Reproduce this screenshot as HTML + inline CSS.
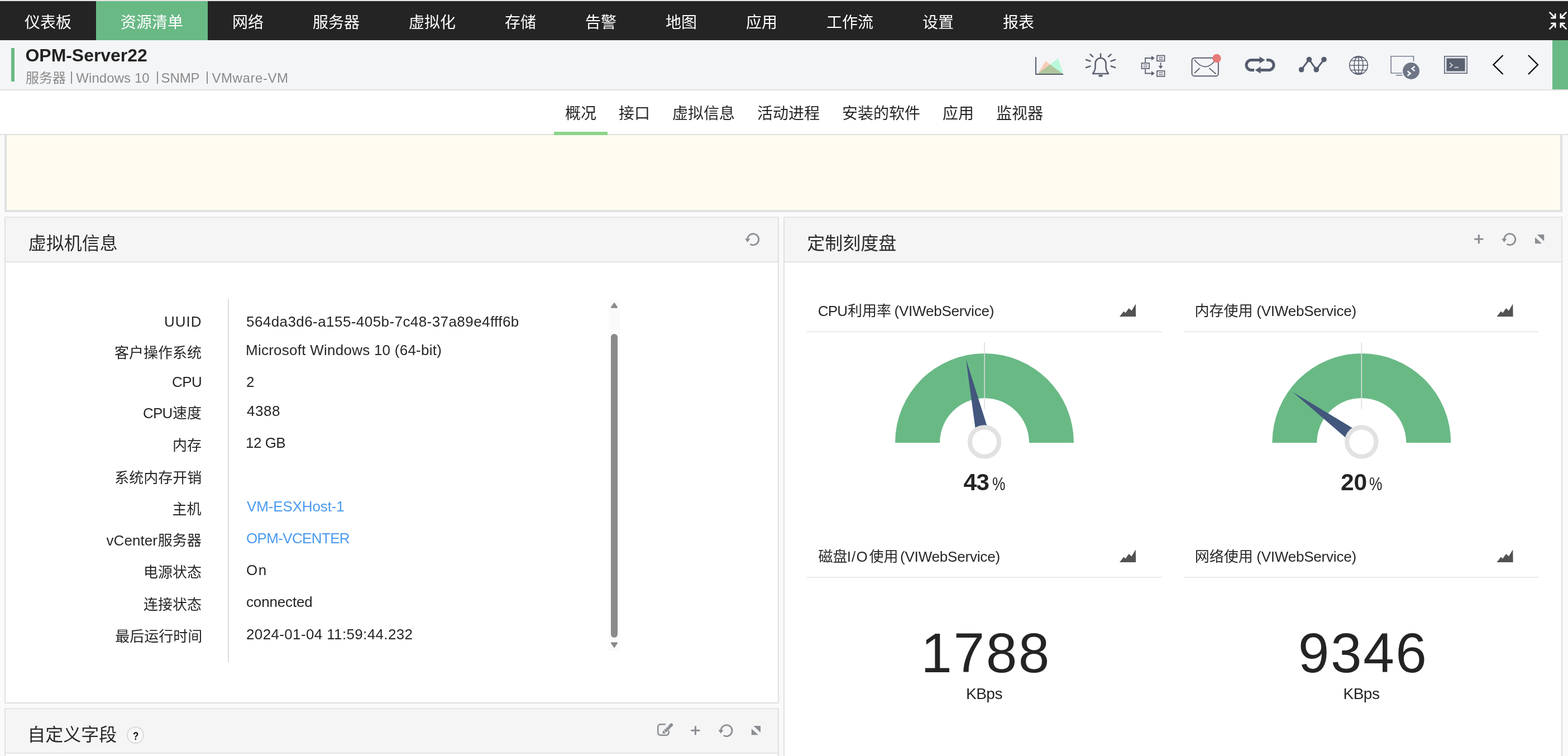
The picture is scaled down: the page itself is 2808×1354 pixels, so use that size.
<!DOCTYPE html>
<html lang="zh-CN"><head><meta charset="utf-8"><title>OPM-Server22</title>
<style>
html,body{margin:0;padding:0;}
body{width:2808px;height:1354px;overflow:hidden;background:#fafafa;font-family:'Liberation Sans','Noto Sans CJK SC',sans-serif;position:relative;}
#root{position:absolute;left:0;top:0;width:2808px;height:1354px;overflow:hidden;will-change:transform;}
#root>div,#root>span,#root>svg{position:absolute;}
#root>span{white-space:pre;display:block;}
</style></head>
<body><div id="root">
<div style="left:0px;top:0px;width:2808px;height:2px;background:#e7e7e5;"></div>
<div style="left:0px;top:2px;width:2808px;height:70px;background:#242424;"></div>
<div style="left:172px;top:2px;width:200px;height:70px;background:#69b985;"></div>
<span style="left:44.00px;top:26.54px;font-size:28px;line-height:28px;color:#fff;">仪表板</span>
<span style="left:216.00px;top:26.54px;font-size:28px;line-height:28px;color:#fff;">资源清单</span>
<span style="left:416.00px;top:26.54px;font-size:28px;line-height:28px;color:#fff;">网络</span>
<span style="left:560.00px;top:26.54px;font-size:28px;line-height:28px;color:#fff;">服务器</span>
<span style="left:732.00px;top:26.54px;font-size:28px;line-height:28px;color:#fff;">虚拟化</span>
<span style="left:904.00px;top:26.54px;font-size:28px;line-height:28px;color:#fff;">存储</span>
<span style="left:1048.00px;top:26.54px;font-size:28px;line-height:28px;color:#fff;">告警</span>
<span style="left:1192.00px;top:26.54px;font-size:28px;line-height:28px;color:#fff;">地图</span>
<span style="left:1336.00px;top:26.54px;font-size:28px;line-height:28px;color:#fff;">应用</span>
<span style="left:1480.00px;top:26.54px;font-size:28px;line-height:28px;color:#fff;">工作流</span>
<span style="left:1652.00px;top:26.54px;font-size:28px;line-height:28px;color:#fff;">设置</span>
<span style="left:1796.00px;top:26.54px;font-size:28px;line-height:28px;color:#fff;">报表</span>
<div style="left:0px;top:72px;width:2808px;height:88px;background:#f4f5f7;"></div>
<div style="left:0px;top:160px;width:2808px;height:2px;background:#e1e1e1;"></div>
<div style="left:20px;top:86px;width:6px;height:60px;background:#69b985;"></div>
<div style="left:2780px;top:72px;width:28px;height:88px;background:#69b985;"></div>
<span style="left:45.50px;top:82.91px;font-size:32px;line-height:32px;color:#222;font-weight:bold;letter-spacing:-0.05px;">OPM-Server22</span>
<span style="left:46.00px;top:127.68px;font-size:24px;line-height:24px;color:#8a8a8a;">服务器</span>
<span style="left:136.25px;top:127.68px;font-size:24px;line-height:24px;color:#8a8a8a;letter-spacing:0.08px;">Windows 10</span>
<span style="left:288.50px;top:127.68px;font-size:24px;line-height:24px;color:#8a8a8a;letter-spacing:-0.08px;">SNMP</span>
<span style="left:379.50px;top:127.68px;font-size:24px;line-height:24px;color:#8a8a8a;letter-spacing:0.56px;">VMware-VM</span>
<div style="left:126.5px;top:128px;width:2px;height:22px;background:#8f8f8f;"></div>
<div style="left:280.5px;top:128px;width:2px;height:22px;background:#8f8f8f;"></div>
<div style="left:370px;top:128px;width:2px;height:22px;background:#8f8f8f;"></div>
<div style="left:0px;top:162px;width:2808px;height:78px;background:#fff;"></div>
<div style="left:0px;top:240px;width:2808px;height:2px;background:#dfdfdf;"></div>
<div style="left:992px;top:236px;width:96px;height:6px;background:#8cd489;"></div>
<span style="left:1012.00px;top:190.02px;font-size:28px;line-height:28px;color:#262626;">概况</span>
<span style="left:1108.00px;top:190.02px;font-size:28px;line-height:28px;color:#262626;">接口</span>
<span style="left:1204.00px;top:190.02px;font-size:28px;line-height:28px;color:#262626;">虚拟信息</span>
<span style="left:1356.00px;top:190.02px;font-size:28px;line-height:28px;color:#262626;">活动进程</span>
<span style="left:1508.00px;top:190.02px;font-size:28px;line-height:28px;color:#262626;">安装的软件</span>
<span style="left:1688.00px;top:190.02px;font-size:28px;line-height:28px;color:#262626;">应用</span>
<span style="left:1784.00px;top:190.02px;font-size:28px;line-height:28px;color:#262626;">监视器</span>
<div style="left:8px;top:242px;width:2790px;height:138px;background:#e1e1e1;"></div>
<div style="left:12px;top:242px;width:2782px;height:134px;background:#fefcf0;"></div>
<div style="left:8px;top:388px;width:1387px;height:872px;background:#e0e0e0;"></div>
<div style="left:8px;top:388px;width:1387px;height:2px;background:#e6e6e6;"></div>
<div style="left:10px;top:390px;width:1383px;height:78px;background:#f5f5f5;"></div>
<div style="left:10px;top:468px;width:1383px;height:2px;background:#e3e3e3;"></div>
<div style="left:10px;top:470px;width:1383px;height:788px;background:#fff;"></div>
<div style="left:8px;top:1268px;width:1387px;height:200px;background:#e0e0e0;"></div>
<div style="left:8px;top:1268px;width:1387px;height:2px;background:#e6e6e6;"></div>
<div style="left:10px;top:1270px;width:1383px;height:78px;background:#f5f5f5;"></div>
<div style="left:10px;top:1348px;width:1383px;height:2px;background:#e3e3e3;"></div>
<div style="left:10px;top:1350px;width:1383px;height:116px;background:#fff;"></div>
<div style="left:1403px;top:388px;width:1395px;height:1100px;background:#e0e0e0;"></div>
<div style="left:1403px;top:388px;width:1395px;height:2px;background:#e6e6e6;"></div>
<div style="left:1405px;top:390px;width:1391px;height:78px;background:#f5f5f5;"></div>
<div style="left:1405px;top:468px;width:1391px;height:2px;background:#e3e3e3;"></div>
<div style="left:1405px;top:470px;width:1391px;height:1016px;background:#fff;"></div>
<span style="left:50.66px;top:419.88px;font-size:32px;line-height:32px;color:#2a2a2a;">虚拟机信息</span>
<span style="left:1445.35px;top:419.88px;font-size:32px;line-height:32px;color:#2a2a2a;">定制刻度盘</span>
<span style="left:49.18px;top:1299.92px;font-size:32px;line-height:32px;color:#2a2a2a;">自定义字段</span>
<div style="left:226.5px;top:1301.25px;width:27px;height:27px;background:#f8f8f8;border:2px solid #dbdbdb;border-radius:50%;"></div>
<span style="left:237.60px;top:1307.10px;font-size:21px;line-height:21px;color:#111;font-weight:bold;transform:scaleX(0.8);transform-origin:0 0;">?</span>
<div style="left:408px;top:536px;width:2px;height:650px;background:#dcdcdc;"></div>
<div style="left:1090px;top:536px;width:20px;height:630px;background:#fafafa;"></div>
<div style="left:1094px;top:598px;width:12px;height:544px;background:#8a8a8a;border-radius:6px;"></div>
<span style="left:294.00px;top:562.99px;font-size:26px;line-height:26px;color:#262626;letter-spacing:1.0px;">UUID</span>
<span style="left:205.09px;top:619.16px;font-size:26px;line-height:26px;color:#262626;">客户操作系统</span>
<span style="left:308.00px;top:670.99px;font-size:26px;line-height:26px;color:#262626;letter-spacing:-0.5px;">CPU</span>
<span style="left:256.00px;top:726.74px;font-size:26px;line-height:26px;color:#262626;letter-spacing:-0.75px;">CPU</span>
<span style="left:308.99px;top:726.74px;font-size:26px;line-height:26px;color:#262626;">速度</span>
<span style="left:309.12px;top:784.89px;font-size:26px;line-height:26px;color:#262626;">内存</span>
<span style="left:205.22px;top:842.75px;font-size:26px;line-height:26px;color:#262626;">系统内存开销</span>
<span style="left:308.55px;top:899.12px;font-size:26px;line-height:26px;color:#262626;">主机</span>
<span style="left:190.50px;top:955.49px;font-size:26px;line-height:26px;color:#262626;letter-spacing:0.08px;">vCenter</span>
<span style="left:282.73px;top:955.49px;font-size:26px;line-height:26px;color:#262626;">服务器</span>
<span style="left:257.09px;top:1012.31px;font-size:26px;line-height:26px;color:#262626;">电源状态</span>
<span style="left:257.09px;top:1069.77px;font-size:26px;line-height:26px;color:#262626;">连接状态</span>
<span style="left:206.26px;top:1126.96px;font-size:26px;line-height:26px;color:#262626;">最后运行时间</span>
<span style="left:441.00px;top:562.99px;font-size:26px;line-height:26px;color:#262626;letter-spacing:0.43px;">564da3d6-a155-405b-7c48-37a89e4fff6b</span>
<span style="left:440.00px;top:614.24px;font-size:26px;line-height:26px;color:#262626;letter-spacing:0.25px;">Microsoft Windows 10 (64-bit)</span>
<span style="left:441.00px;top:670.99px;font-size:26px;line-height:26px;color:#262626;">2</span>
<span style="left:442.00px;top:722.99px;font-size:26px;line-height:26px;color:#262626;letter-spacing:0.5px;">4388</span>
<span style="left:440.00px;top:780.49px;font-size:26px;line-height:26px;color:#262626;letter-spacing:-0.5px;">12 GB</span>
<span style="left:442.00px;top:894.24px;font-size:26px;line-height:26px;color:#4a9aef;letter-spacing:-0.14px;">VM-ESXHost-1</span>
<span style="left:441.00px;top:950.99px;font-size:26px;line-height:26px;color:#4a9aef;letter-spacing:-0.65px;">OPM-VCENTER</span>
<span style="left:441.00px;top:1008.49px;font-size:26px;line-height:26px;color:#262626;letter-spacing:1.5px;">On</span>
<span style="left:441.00px;top:1065.49px;font-size:26px;line-height:26px;color:#262626;letter-spacing:-0.16px;">connected</span>
<span style="left:441.00px;top:1122.99px;font-size:26px;line-height:26px;color:#262626;letter-spacing:0.36px;">2024-01-04 11:59:44.232</span>
<div style="left:1445px;top:593px;width:636px;height:2px;background:#ebebeb;"></div>
<div style="left:2121px;top:593px;width:635px;height:2px;background:#ebebeb;"></div>
<div style="left:1445px;top:1033px;width:636px;height:2px;background:#ebebeb;"></div>
<div style="left:2121px;top:1033px;width:635px;height:2px;background:#ebebeb;"></div>
<span style="left:1464.75px;top:544.24px;font-size:26px;line-height:26px;color:#262626;letter-spacing:-0.75px;">CPU</span>
<span style="left:1518.05px;top:544.24px;font-size:26px;line-height:26px;color:#262626;">利用率</span>
<span style="left:1601.50px;top:544.24px;font-size:26px;line-height:26px;color:#262626;letter-spacing:-0.21px;">(VIWebService)</span>
<span style="left:2139.43px;top:544.24px;font-size:26px;line-height:26px;color:#262626;">内存使用</span>
<span style="left:2250.25px;top:544.24px;font-size:26px;line-height:26px;color:#262626;letter-spacing:-0.21px;">(VIWebService)</span>
<span style="left:1465.57px;top:984.24px;font-size:26px;line-height:26px;color:#262626;">磁盘</span>
<span style="left:1516.75px;top:984.24px;font-size:26px;line-height:26px;color:#262626;letter-spacing:1.12px;">I/O</span>
<span style="left:1556.45px;top:984.24px;font-size:26px;line-height:26px;color:#262626;">使用</span>
<span style="left:1612.00px;top:984.24px;font-size:26px;line-height:26px;color:#262626;letter-spacing:-0.19px;">(VIWebService)</span>
<span style="left:2139.71px;top:984.24px;font-size:26px;line-height:26px;color:#262626;">网络使用</span>
<span style="left:2250.25px;top:984.24px;font-size:26px;line-height:26px;color:#262626;letter-spacing:-0.21px;">(VIWebService)</span>
<span style="left:1725.60px;top:842.77px;font-size:42.5px;line-height:42.5px;color:#242424;font-weight:bold;letter-spacing:-1.0px;">43</span>
<span style="left:1776.50px;top:850.32px;font-size:33px;line-height:33px;color:#242424;transform:scaleX(0.8);transform-origin:0 0;">%</span>
<span style="left:2400.90px;top:842.77px;font-size:42.5px;line-height:42.5px;color:#242424;font-weight:bold;">20</span>
<span style="left:2452.00px;top:850.32px;font-size:33px;line-height:33px;color:#242424;transform:scaleX(0.8);transform-origin:0 0;">%</span>
<span style="left:1649.25px;top:1119.10px;font-size:100px;line-height:100px;color:#242424;letter-spacing:2.58px;">1788</span>
<span style="left:2324.75px;top:1119.10px;font-size:100px;line-height:100px;color:#242424;letter-spacing:2.58px;">9346</span>
<span style="left:1730.00px;top:1228.80px;font-size:28px;line-height:28px;color:#242424;letter-spacing:-0.5px;">KBps</span>
<span style="left:2405.50px;top:1228.80px;font-size:28px;line-height:28px;color:#242424;letter-spacing:-0.5px;">KBps</span>
<svg width="2808" height="1354" viewBox="0 0 2808 1354" style="left:0;top:0" fill="none">
<g stroke="#fff" stroke-width="2.7" stroke-linecap="round" stroke-linejoin="round">
<path d="M2775.4 22.4L2785.2 32.2M2778.2999999999997 32.2H2785.2V25.300000000000004"/>
<path d="M2804.6 22.4L2794.8 32.2M2801.7000000000003 32.2H2794.8V25.300000000000004"/>
<path d="M2775.4 51.6L2785.2 41.8M2778.2999999999997 41.8H2785.2V48.699999999999996"/>
<path d="M2804.6 51.6L2794.8 41.8M2801.7000000000003 41.8H2794.8V48.699999999999996"/>
</g>
<polygon points="1858.5,132 1872.5,109.5 1903,132" fill="#f9cdb5"/>
<polygon points="1858.5,132 1895,104.5 1904,132" fill="#b8f9dc"/>
<polygon points="1858.5,132 1880.2,115.5 1903,132" fill="#b1c59d"/>
<path d="M1855 102V133H1904" stroke="#555b6e" stroke-width="2"/>
<g stroke="#5b6272" stroke-width="2.6" stroke-linecap="round" stroke-linejoin="round">
<path d="M1957 132C1960 128 1961.5 125 1961.5 120V113.5A9.5 9.5 0 0 1 1980.5 113.5V120C1980.5 125 1982 128 1985 132Z"/>
<path d="M1971 96.5V103"/>
<path d="M1952.6 97.5L1957 101.5M1945 107L1952.5 109.5M1945 121L1952.5 118.5"/>
<path d="M1989.4 97.5L1985 101.5M1997 107L1989.5 109.5M1997 121L1989.5 118.5"/>
</g>
<rect x="1967.5" y="134" width="7" height="3.5" fill="#5b6272"/>
<g stroke="#5b6272" stroke-width="1.8">
<rect x="2072" y="99.5" width="13.5" height="9.8"/>
<path d="M2075 102.9H2082.5M2075 106.1H2082.5" stroke-width="1.4"/>
<rect x="2044.5" y="113" width="13.5" height="9.8"/>
<path d="M2047.5 116.4H2055.0M2047.5 119.6H2055.0" stroke-width="1.4"/>
<rect x="2072" y="127" width="13.5" height="9.8"/>
<path d="M2075 130.4H2082.5M2075 133.6H2082.5" stroke-width="1.4"/>
<path d="M2051 112V104H2063M2051 124V131.5H2063M2078.5 112V119"/>
</g>
<path d="M2062 99.8L2067.8 104L2062 108.2ZM2062 127.3L2067.8 131.5L2062 135.7ZM2074.3 118L2082.7 118L2078.5 123Z" fill="#5b6272"/>
<g stroke="#5b6272" stroke-width="2" stroke-linecap="round">
<rect x="2134.5" y="103.7" width="47.3" height="32.5" rx="4.5"/>
<path d="M2139.5 107.5Q2158 131 2176 108.5" stroke-width="1.8"/>
<path d="M2139.5 130.5L2148 122.5M2166 122.5L2177 132" stroke-width="1.8"/>
</g>
<circle cx="2179" cy="104.5" r="7.7" fill="#e57b78"/>
<g stroke="#555d6e" stroke-width="5" stroke-linecap="butt">
<path d="M2246 125.5H2241A9 9 0 0 1 2241 107.5H2257"/>
<path d="M2268 107.5H2272A9 9 0 0 1 2272 125.5H2256"/>
</g>
<path d="M2255.5 101.3L2265.5 107.5L2255.5 113.7ZM2257.5 119.3L2247.5 125.5L2257.5 131.7Z" fill="#555d6e"/>
<polyline points="2330.6,124.75 2344.4,106.5 2357.25,124.75 2371,106.5" stroke="#555d6e" stroke-width="3"/>
<circle cx="2330.6" cy="124.75" r="4.8" fill="#555d6e"/>
<circle cx="2344.4" cy="106.5" r="4.8" fill="#555d6e"/>
<circle cx="2357.25" cy="124.75" r="4.8" fill="#555d6e"/>
<circle cx="2371" cy="106.5" r="4.8" fill="#555d6e"/>
<g stroke="#5b6272" stroke-width="1.6">
<circle cx="2433" cy="117" r="16.3"/>
<ellipse cx="2433" cy="117" rx="8" ry="16.3"/>
<path d="M2433 100.7V133.3M2416.7 117H2449.3M2419 108.5H2447M2419 125.5H2447M2424 103H2442M2424 131H2442" />
</g>
<path d="M2531.5 110V100.75H2491V131H2511" stroke="#7a8292" stroke-width="1.7"/>
<path d="M2500 134.75H2511.5" stroke="#7a8292" stroke-width="1.7"/>
<circle cx="2527" cy="127" r="15" fill="#6e7686"/>
<path d="M2520.6 127.5L2525.8 131.5L2520.6 135.5M2533.6 119L2528.6 123L2533.6 127.2" stroke="#fff" stroke-width="2.4" stroke-linejoin="miter"/>
<rect x="2586.75" y="100.75" width="40.5" height="30.5" fill="#e4e5e9" stroke="#596070" stroke-width="1.5"/>
<rect x="2590.5" y="104.5" width="33" height="23" fill="#596070"/>
<path d="M2596 112.5L2601 116.8L2596 121M2604.5 120.75H2612" stroke="#c5c8d0" stroke-width="2"/>
<path d="M2691.5 99L2674.5 116L2691.5 133M2737 99L2754 116L2737 133" stroke="#000" stroke-width="2.3"/>
<path d="M1343.45 437.23A10 10 0 1 0 1338.75 429.25" stroke="#8a8e93" stroke-width="2.8"/>
<path d="M1333.95 427.45H1343.35L1338.65 433.95Z" fill="#8a8e93"/>
<path d="M2641.5 428.2H2655.1000000000004M2648.3 421.4V435.0" stroke="#8a8e93" stroke-width="3.1" stroke-linecap="round"/>
<path d="M2698.50 437.18A10 10 0 1 0 2693.8 429.2" stroke="#8a8e93" stroke-width="2.8"/>
<path d="M2689.0 427.4H2698.4L2693.7000000000003 433.9Z" fill="#8a8e93"/>
<path d="M2752.5 420H2765.2V432ZM2749 425V436.2H2761.2Z" fill="#8a8e93"/>
<path d="M1238.6000000000001 1308.25H1252.2M1245.4 1301.45V1315.05" stroke="#8a8e93" stroke-width="3.1" stroke-linecap="round"/>
<path d="M1295.70 1317.08A10 10 0 1 0 1291 1309.1" stroke="#8a8e93" stroke-width="2.8"/>
<path d="M1286.2 1307.3H1295.6L1290.9 1313.8Z" fill="#8a8e93"/>
<path d="M1349.3 1300H1362.0V1312ZM1345.8 1305V1316.2H1358.0Z" fill="#8a8e93"/>
<path d="M1191 1297.25H1183A4.75 4.75 0 0 0 1178.25 1302V1312A4.75 4.75 0 0 0 1183 1316.75H1193A4.75 4.75 0 0 0 1197.75 1312V1309.5" stroke="#8a8e93" stroke-width="2.5" stroke-linecap="round"/>
<path d="M1190.8 1309.8L1199.2 1301.4" stroke="#8a8e93" stroke-width="5.6"/>
<path d="M1200.3 1300.3L1202.4 1298.2" stroke="#8a8e93" stroke-width="5.6" stroke-linecap="round"/>
<path d="M1190.6 1307.6L1197.8 1300.4" stroke="#e9e9ea" stroke-width="0.9"/>
<path d="M1187 1313.6L1187.9 1308.8L1191.8 1312.7Z" fill="#8a8e93" stroke="#8a8e93" stroke-width="1" stroke-linejoin="round"/>
<path d="M1095.3 550.5L1100 543.4L1104.7 550.5Z" fill="#8a8a8a" stroke="#8a8a8a" stroke-width="2.6" stroke-linejoin="round"/>
<path d="M1095.3 1151.5L1100 1158.6L1104.7 1151.5Z" fill="#8a8a8a" stroke="#8a8a8a" stroke-width="2.6" stroke-linejoin="round"/>
<polygon points="2005.00,566.90 2012.40,557.55 2015.60,560.60 2021.60,552.10 2026.40,556.40 2033.80,544.20 2034.10,566.90" fill="#525252"/>
<polygon points="2680.50,566.90 2687.90,557.55 2691.10,560.60 2697.10,552.10 2701.90,556.40 2709.30,544.20 2709.60,566.90" fill="#525252"/>
<polygon points="2005.00,1006.90 2012.40,997.55 2015.60,1000.60 2021.60,992.10 2026.40,996.40 2033.80,984.20 2034.10,1006.90" fill="#525252"/>
<polygon points="2680.50,1006.90 2687.90,997.55 2691.10,1000.60 2697.10,992.10 2701.90,996.40 2709.30,984.20 2709.60,1006.90" fill="#525252"/>
<path d="M1603 793A160 160 0 0 1 1923 793H1843A80 80 0 0 0 1683 793Z" fill="#69b985"/>
<path d="M1763 613V732.5" stroke="#dcdcdc" stroke-width="1.6"/>
<polygon points="1729.84,643.16 1775.69,788.66 1750.31,794.34" fill="#43577d"/>
<circle cx="1763" cy="791.5" r="26.2" fill="#fff" stroke="#e2e2e2" stroke-width="8.2"/>
<path d="M2278.3 793A160 160 0 0 1 2598.3 793H2518.3A80 80 0 0 0 2358.3 793Z" fill="#69b985"/>
<path d="M2438.3 613V732.5" stroke="#dcdcdc" stroke-width="1.6"/>
<polygon points="2315.33,702.16 2445.94,780.98 2430.66,802.02" fill="#43577d"/>
<circle cx="2438.3" cy="791.5" r="26.2" fill="#fff" stroke="#e2e2e2" stroke-width="8.2"/>
</svg>
</div></body></html>
